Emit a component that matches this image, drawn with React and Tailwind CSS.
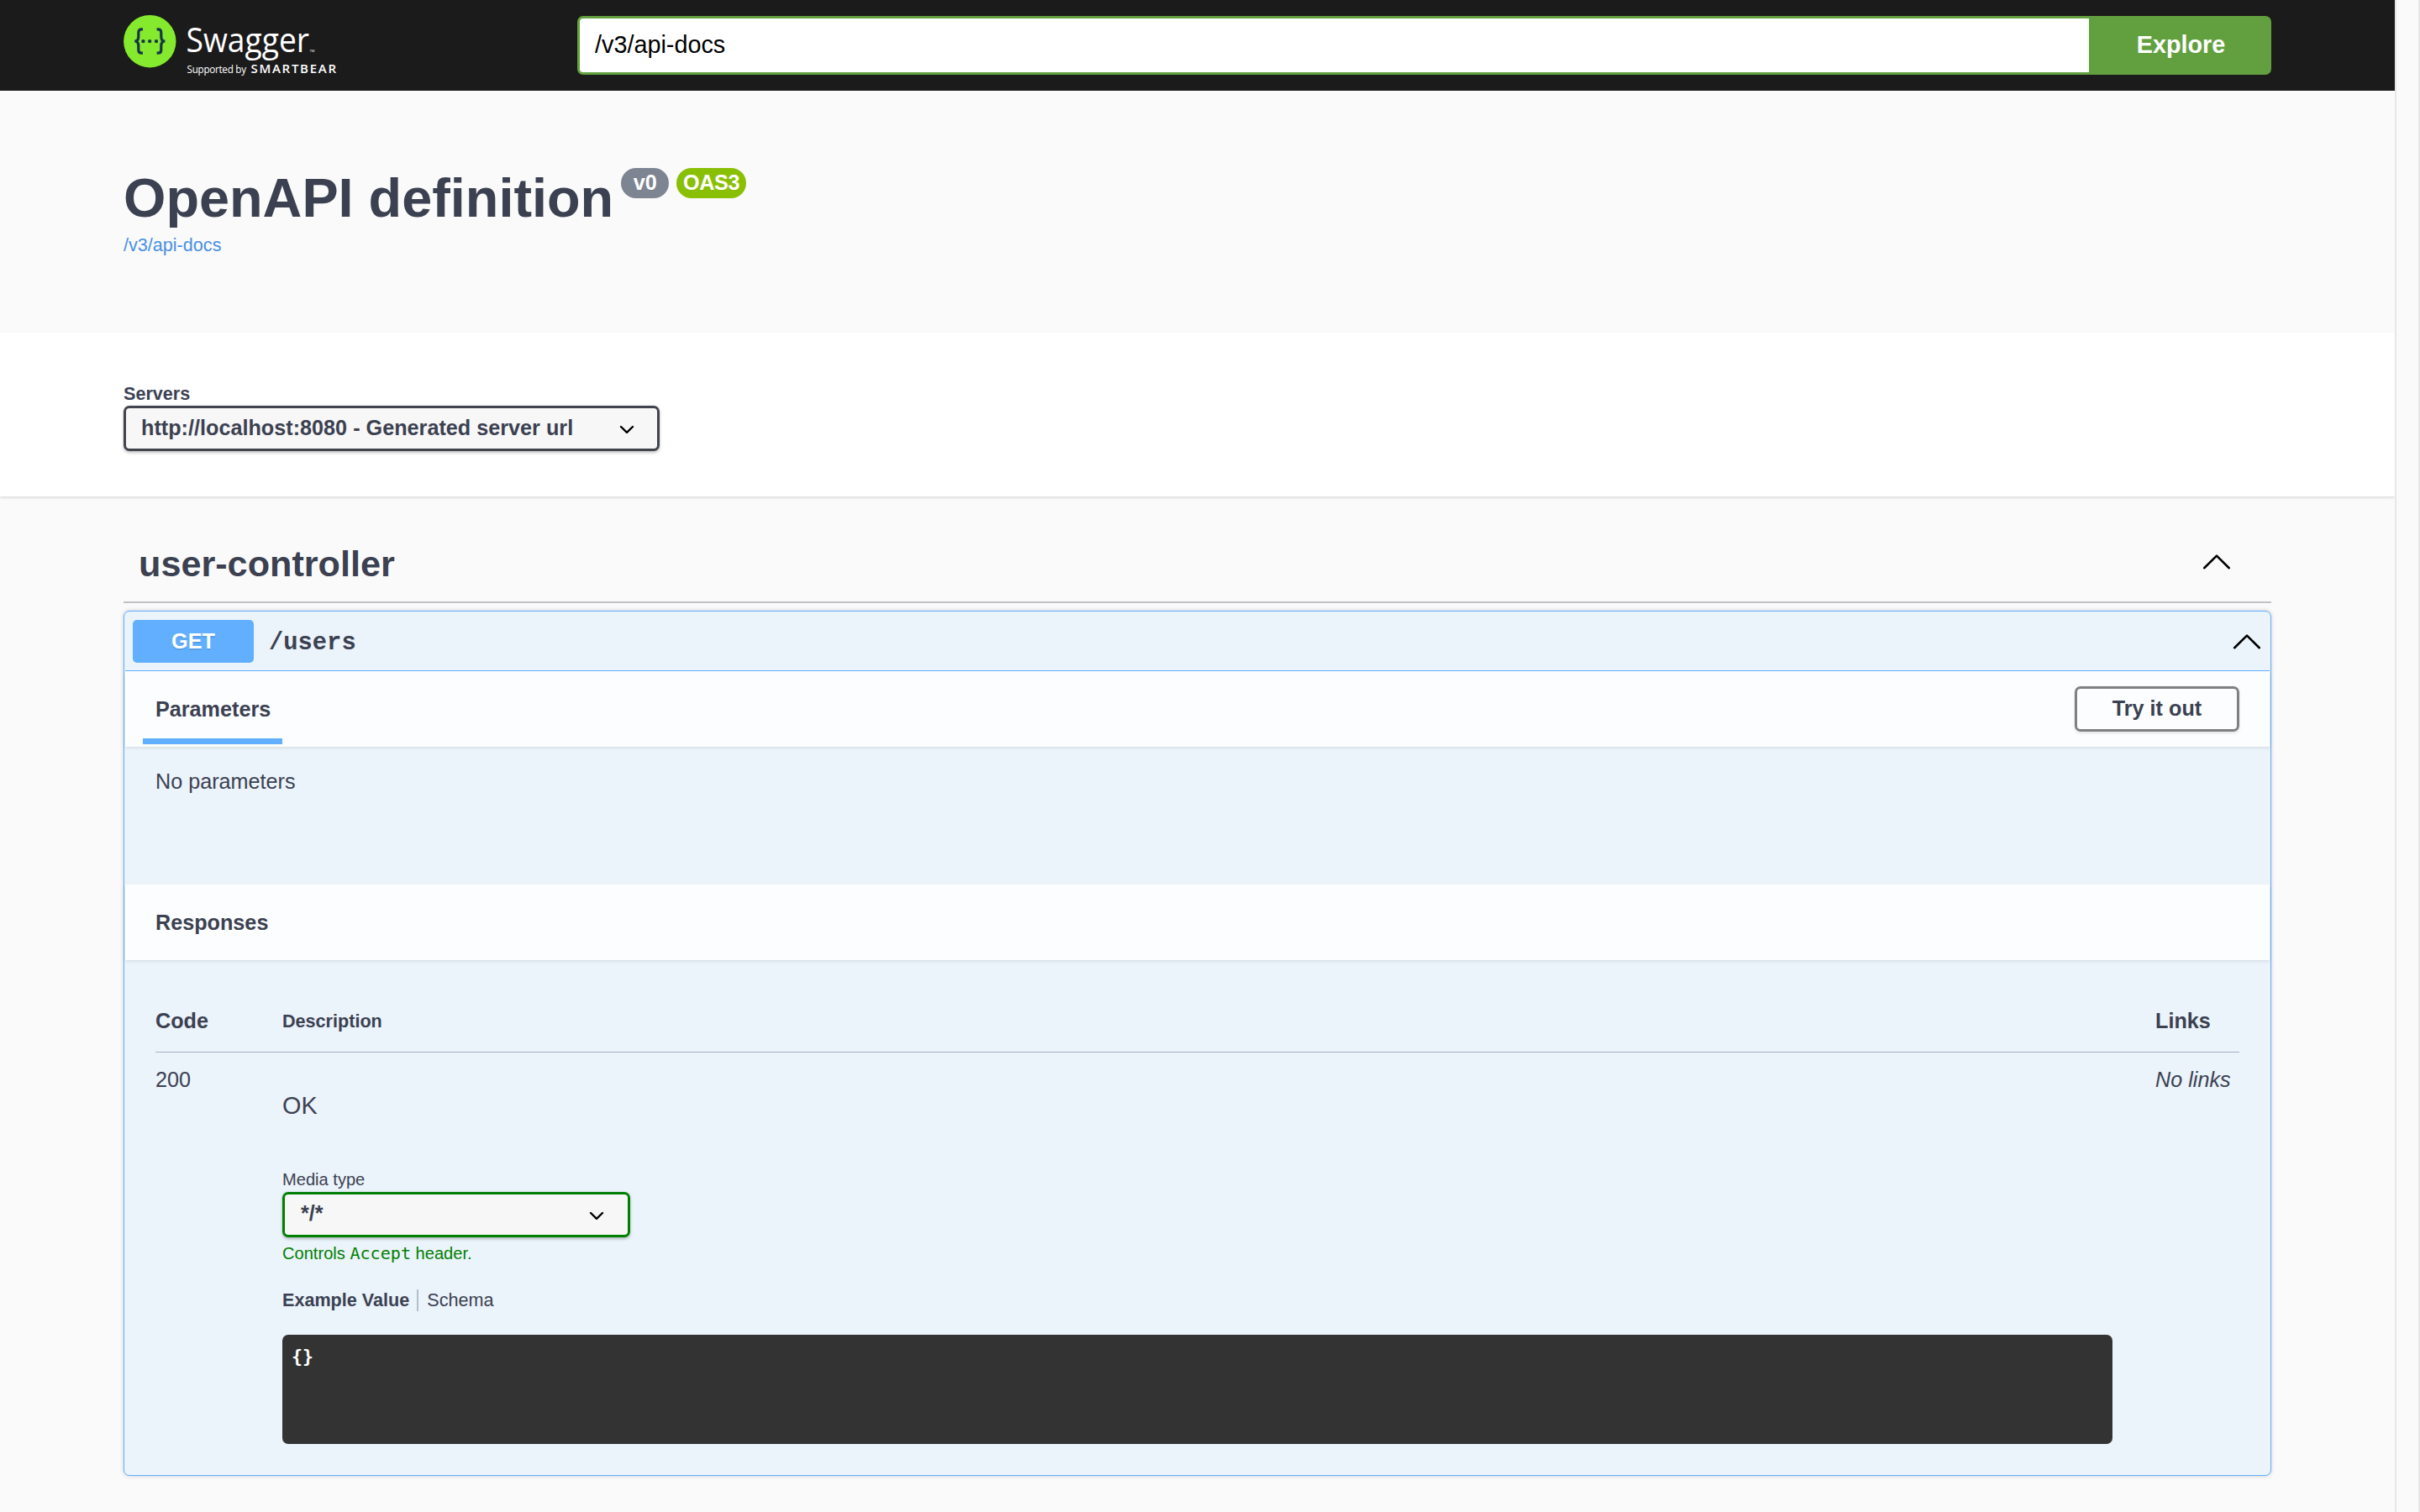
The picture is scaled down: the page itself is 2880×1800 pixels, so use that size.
import { useState } from 'react'

function Logo() {
  return (
    <svg width="256" height="82" viewBox="0 0 256 82" fill="none" aria-label="Swagger">
      <circle cx="31.3" cy="31.2" r="31.2" fill="#85ea2d" />
      <g stroke="#173647" strokeWidth="3.2">
        <path d="M23 16.8h-1.6c-2.6 0-3.6 1.4-3.6 4v4.6c0 3-1.2 5.6-4.6 5.6 3.4 0 4.6 2.6 4.6 5.6v4.6c0 2.6 1 4 3.6 4H23" />
        <path d="M39.6 16.8h1.6c2.6 0 3.6 1.4 3.6 4v4.6c0 3 1.2 5.6 4.6 5.6-3.4 0-4.6 2.6-4.6 5.6v4.6c0 2.6-1 4-3.6 4h-1.6" />
      </g>
      <g fill="#173647">
        <circle cx="23.4" cy="31.1" r="2.2" />
        <circle cx="31.2" cy="31.1" r="2.2" />
        <circle cx="39" cy="31.1" r="2.2" />
      </g>
      <g fill="#fff" fontFamily="'Open Sans', sans-serif">
        <text x="74.5" y="44" fontSize="41" textLength="146.5" lengthAdjust="spacingAndGlyphs">Swagger</text>
        <text x="221.5" y="43.6" fontSize="4" textLength="6" lengthAdjust="spacingAndGlyphs">TM</text>
        <text x="75.5" y="69" fontSize="11.7" textLength="70.5" lengthAdjust="spacing">Supported by</text>
        <text x="151.5" y="69" fontSize="15" fontWeight="600" textLength="101.5" lengthAdjust="spacing">SMARTBEAR</text>
      </g>
    </svg>
  )
}

function ArrowUp() {
  return (
    <svg width="34" height="20" viewBox="0 0 34 20" fill="none" stroke="#000" strokeWidth="2.6" strokeLinecap="round" strokeLinejoin="round">
      <path d="M2.2 17.2 17 2.6l14.8 14.6" />
    </svg>
  )
}

function Select({ children, className }) {
  return (
    <div className={`flex h-[54px] items-center justify-between rounded-[7px] border-[3px] bg-[#f7f7f7] text-[25.2px] leading-[48px] font-bold shadow-[0_1.8px_3.6px_rgba(0,0,0,0.25)] ${className}`}>
      {children}
      <svg width="18" height="12" viewBox="0 0 18 12" fill="none" stroke="#000" strokeWidth="2.4" strokeLinecap="round" strokeLinejoin="round" className="mt-[3px]">
        <path d="M2 2l7 6.8L16 2" />
      </svg>
    </div>
  )
}

function SectionHeader({ children }) {
  return (
    <div className="mx-px flex h-[90px] justify-between bg-white/80 pr-9 pl-[21px] shadow-[0_1.8px_3.6px_rgba(0,0,0,0.1)]">
      {children}
    </div>
  )
}

export default function App() {
  const [url, setUrl] = useState('/v3/api-docs')

  return (
    <div className="flex h-[1800px] w-[2880px] overflow-hidden bg-[#fafafa] font-['Liberation_Sans',Arial,sans-serif] text-[#3b4151]">
      <div className="w-[2850px]">
        {/* Topbar */}
        <header className="flex h-[108px] items-start bg-[#1b1b1b] px-[147px]">
          <div className="w-[540px] pt-[18px]">
            <Logo />
          </div>
          <div className="mt-[19px] flex h-[70px] flex-1">
            <input
              value={url}
              onChange={(e) => setUrl(e.target.value)}
              className="min-w-0 flex-1 rounded-l-[7px] border-[3px] border-r-0 border-[#62a03f] bg-white px-[18px] text-[28.8px] text-black outline-none"
            />
            <button className="w-[217px] rounded-r-[7px] bg-[#62a03f] pl-0.5 text-[28.8px] font-bold text-white">
              Explore
            </button>
          </div>
        </header>

        {/* Title block */}
        <section className="h-[288px] px-[147px] pt-[92px]">
          <div className="flex h-[72px] items-start">
            <h1 className="text-[64.8px] leading-[71px] font-bold">OpenAPI definition</h1>
            <span className="ml-[9px] h-9 w-[57px] rounded-full bg-[#7d8492] text-center text-[25.2px] leading-[34px] font-bold text-white">v0</span>
            <span className="ml-[9px] h-9 w-[83px] rounded-full bg-[#89bf04] text-center text-[25.2px] leading-[34px] font-bold tracking-[-0.3px] text-white">OAS3</span>
          </div>
          <a className="mt-1.5 block text-[21.6px] leading-7 text-[#4990e2]">/v3/api-docs</a>
        </section>

        {/* Servers */}
        <section className="h-[195px] bg-white px-[147px] pt-[61px] shadow-[0_1.8px_3.6px_rgba(0,0,0,0.15)]">
          <p className="mb-0.5 text-[21.6px] leading-6 font-bold">Servers</p>
          <Select className="w-[638px] border-[#41444e] pr-[27px] pl-[18px]">
            <span className="pb-0.5 tracking-[0.01px]">http://localhost:8080 - Generated server url</span>
          </Select>
        </section>

        <main className="px-[147px] pt-[55px]">
          <div className="flex h-[72px] items-start justify-between border-b-2 border-[#3b4151]/30 pr-12 pl-[18px]">
            <h2 className="text-[43.2px] leading-[50px] font-bold">user-controller</h2>
            <div className="pt-[13px]">
              <ArrowUp />
            </div>
          </div>

          {/* GET /users */}
          <div className="mt-[9px] h-[1030px] rounded-[7px] border border-[#61affe] bg-[#ebf3fb] shadow-[0_0_5.4px_rgba(0,0,0,0.19)]">
            <div className="mx-px flex h-[71px] items-center border-b border-[#61affe] pr-2.5 pl-[9px]">
              <span className="h-[51px] w-36 rounded-[5px] bg-[#61affe] text-center text-[25.2px] leading-[50px] font-bold text-white [text-shadow:0_1.8px_0_rgba(0,0,0,0.1)]">
                GET
              </span>
              <span className="flex-1 pt-1.5 pl-[18px] font-['Liberation_Mono',monospace] text-[28.8px] font-bold">/users</span>
              <div className="pt-px">
                <ArrowUp />
              </div>
            </div>

            <SectionHeader>
              <div className="flex h-[87px] flex-col justify-between">
                <h4 className="px-[15px] pt-[30px] text-[25.2px] leading-[30px] font-bold">Parameters</h4>
                <div className="h-[7px] w-[166px] bg-[#61affe]" />
              </div>
              <button className="mt-[18px] h-[54px] w-[196px] rounded-[7px] border-[3px] border-[#808080] text-[25.2px] font-bold shadow-[0_1.8px_3.6px_rgba(0,0,0,0.1)]">
                Try it out
              </button>
            </SectionHeader>

            <div className="h-[164px] px-[37px] pt-[26px] text-[25.2px] leading-[30px]">No parameters</div>

            <SectionHeader>
              <h4 className="pt-[30px] pl-[15px] text-[25.2px] leading-[30px] font-bold">Responses</h4>
            </SectionHeader>

            <div className="px-[37px] pt-[57px]">
              <div className="flex h-[53px] border-b border-[#a9b2c0] text-[25.2px] leading-[30px] font-bold">
                <div className="w-[151px]">Code</div>
                <div className="flex-1 pt-px text-[21.6px]">Description</div>
                <div className="w-[100px]">Links</div>
              </div>
              <div className="flex text-[25.2px] leading-[30px]">
                <div className="w-[151px] pt-[17px]">200</div>
                <div className="mr-[51px] flex-1 pt-[46px]">
                  <p className="text-[28.8px] leading-[34px]">OK</p>
                  <p className="mt-[59px] mb-[3px] text-[20.1px] leading-6">Media type</p>
                  <Select className="w-[414px] border-[green] pr-[28px] pl-[19px]">
                    <span className="pb-[5px]">*/*</span>
                  </Select>
                  <p className="mt-[7px] text-[20.1px] leading-6 text-[green]">
                    Controls <code className="font-['DejaVu_Sans_Mono',monospace] leading-none">Accept</code> header.
                  </p>
                  <div className="mt-[31px] flex text-[21.6px] leading-[26px]">
                    <span className="pr-[9px] font-bold">Example Value</span>
                    <span className="border-l-2 border-[#3b4151]/30 pl-2.5">Schema</span>
                  </div>
                  <pre className="mt-7 h-[130px] rounded-[7px] bg-[#333] px-[11px] pt-[13px] font-['DejaVu_Sans_Mono',monospace] text-[21.6px] leading-[26px] font-bold text-white">
                    {'{}'}
                  </pre>
                </div>
                <div className="w-[100px] pt-[17px] whitespace-nowrap italic">No links</div>
              </div>
            </div>
          </div>
        </main>
      </div>

      {/* Scrollbar track */}
      <div className="flex-1 border-x-2 border-[#e8e8e8] bg-[#fafafa]" />
    </div>
  )
}
